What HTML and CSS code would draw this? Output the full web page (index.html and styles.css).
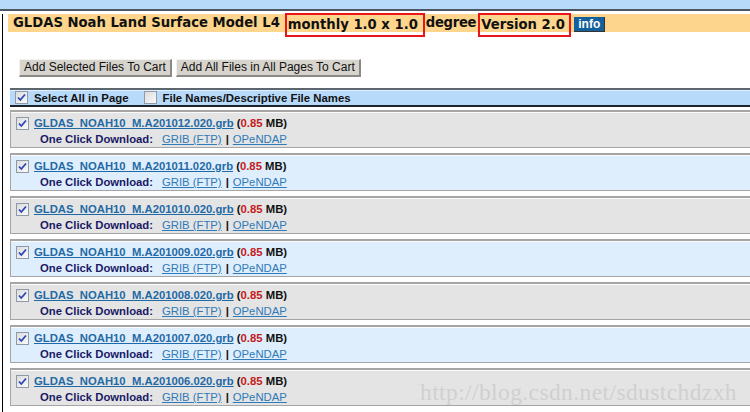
FILE: index.html
```html
<!DOCTYPE html>
<html>
<head>
<meta charset="utf-8">
<link rel="stylesheet" href="styles.css">
</head>
<body>
<div class="topbar"></div>
<div class="page">
  <div class="title">
    <span class="t">GLDAS Noah Land Surface Model L4</span>
    <span class="box box1">monthly 1.0 x 1.0</span>
    <span class="t deg">degree</span>
    <span class="box box2">Version 2.0</span>
    <span class="info">info</span>
  </div>
  <div class="buttons">
    <span class="btn">Add Selected Files To Cart</span>
    <span class="btn">Add All Files in All Pages To Cart</span>
  </div>
  <div class="head">
    <span class="cb on"><svg viewBox="0 0 13 13" width="13" height="13"><path d="M3 6.5 L5.3 9 L10 3.5" fill="none" stroke="#2c46b8" stroke-width="1.8"/></svg></span>
    <span class="hl">Select All in Page</span>
    <span class="cb off"></span>
    <span class="hl">File Names/Descriptive File Names</span>
  </div>
  <div class="list">
    <div class="row grey">
      <div class="l1"><span class="cb on"><svg viewBox="0 0 13 13" width="13" height="13"><path d="M3 6.5 L5.3 9 L10 3.5" fill="none" stroke="#2c46b8" stroke-width="1.8"/></svg></span><a class="fn">GLDAS_NOAH10_M.A201012.020.grb</a><span class="sz"> (<span class="red">0.85</span> MB)</span></div>
      <div class="l2"><span class="ocd">One Click Download:</span><a class="lk">GRIB (FTP)</a><span class="sep">|</span><a class="lk">OPeNDAP</a></div>
    </div>
    <div class="row blue">
      <div class="l1"><span class="cb on"><svg viewBox="0 0 13 13" width="13" height="13"><path d="M3 6.5 L5.3 9 L10 3.5" fill="none" stroke="#2c46b8" stroke-width="1.8"/></svg></span><a class="fn">GLDAS_NOAH10_M.A201011.020.grb</a><span class="sz"> (<span class="red">0.85</span> MB)</span></div>
      <div class="l2"><span class="ocd">One Click Download:</span><a class="lk">GRIB (FTP)</a><span class="sep">|</span><a class="lk">OPeNDAP</a></div>
    </div>
    <div class="row grey">
      <div class="l1"><span class="cb on"><svg viewBox="0 0 13 13" width="13" height="13"><path d="M3 6.5 L5.3 9 L10 3.5" fill="none" stroke="#2c46b8" stroke-width="1.8"/></svg></span><a class="fn">GLDAS_NOAH10_M.A201010.020.grb</a><span class="sz"> (<span class="red">0.85</span> MB)</span></div>
      <div class="l2"><span class="ocd">One Click Download:</span><a class="lk">GRIB (FTP)</a><span class="sep">|</span><a class="lk">OPeNDAP</a></div>
    </div>
    <div class="row blue">
      <div class="l1"><span class="cb on"><svg viewBox="0 0 13 13" width="13" height="13"><path d="M3 6.5 L5.3 9 L10 3.5" fill="none" stroke="#2c46b8" stroke-width="1.8"/></svg></span><a class="fn">GLDAS_NOAH10_M.A201009.020.grb</a><span class="sz"> (<span class="red">0.85</span> MB)</span></div>
      <div class="l2"><span class="ocd">One Click Download:</span><a class="lk">GRIB (FTP)</a><span class="sep">|</span><a class="lk">OPeNDAP</a></div>
    </div>
    <div class="row grey">
      <div class="l1"><span class="cb on"><svg viewBox="0 0 13 13" width="13" height="13"><path d="M3 6.5 L5.3 9 L10 3.5" fill="none" stroke="#2c46b8" stroke-width="1.8"/></svg></span><a class="fn">GLDAS_NOAH10_M.A201008.020.grb</a><span class="sz"> (<span class="red">0.85</span> MB)</span></div>
      <div class="l2"><span class="ocd">One Click Download:</span><a class="lk">GRIB (FTP)</a><span class="sep">|</span><a class="lk">OPeNDAP</a></div>
    </div>
    <div class="row blue">
      <div class="l1"><span class="cb on"><svg viewBox="0 0 13 13" width="13" height="13"><path d="M3 6.5 L5.3 9 L10 3.5" fill="none" stroke="#2c46b8" stroke-width="1.8"/></svg></span><a class="fn">GLDAS_NOAH10_M.A201007.020.grb</a><span class="sz"> (<span class="red">0.85</span> MB)</span></div>
      <div class="l2"><span class="ocd">One Click Download:</span><a class="lk">GRIB (FTP)</a><span class="sep">|</span><a class="lk">OPeNDAP</a></div>
    </div>
    <div class="row grey">
      <div class="l1"><span class="cb on"><svg viewBox="0 0 13 13" width="13" height="13"><path d="M3 6.5 L5.3 9 L10 3.5" fill="none" stroke="#2c46b8" stroke-width="1.8"/></svg></span><a class="fn">GLDAS_NOAH10_M.A201006.020.grb</a><span class="sz"> (<span class="red">0.85</span> MB)</span></div>
      <div class="l2"><span class="ocd">One Click Download:</span><a class="lk">GRIB (FTP)</a><span class="sep">|</span><a class="lk">OPeNDAP</a></div>
    </div>
  </div>
  <div class="watermark">http://blog.csdn.net/sdustchdzxh</div>
</div>
</body>
</html>
```
FILE: styles.css
```css
html, body {
  margin: 0;
  padding: 0;
  background: #fff;
  overflow: hidden;
}
body {
  width: 750px;
  height: 412px;
  font-family: "Liberation Sans", Arial, sans-serif;
  font-size: 12px;
}
.topbar {
  height: 9px;
  background: #b8dafa;
  border-bottom: 2px solid #4e5864;
}
.page {
  position: relative;
  margin-left: 2px;
  border-left: 1px solid #000;
  height: 401px;
  padding-left: 5px;
}
.title {
  margin-top: 3px;
  height: 18px;
  background: #fdd58c;
  display: flex;
  align-items: flex-start;
  font-family: "DejaVu Sans", Verdana, sans-serif;
  font-weight: bold;
  font-size: 13.2px;
  color: #111;
  white-space: nowrap;
}
.title .t {
  line-height: 18px;
}
.title > .t:first-child {
  padding-left: 5px;
  margin-right: 5px;
}
.title .deg {
  letter-spacing: -0.3px;
}
.box {
  box-sizing: border-box;
  height: 24px;
  margin-top: -1px;
  border: 2px solid #e8151b;
  line-height: 19px;
  padding: 0 2px 0 1px;
}
.box1 { width: 140px; margin-right: 1px; }
.box2 { width: 93px; margin-left: 2px; }
.info {
  margin-left: 3px;
  margin-top: 3px;
  height: 14px;
  line-height: 14px;
  padding: 0 4px;
  background: #13609c;
  color: #fff;
  font-family: "Liberation Sans", Arial, sans-serif;
  font-size: 12px;
  border-right: 1px solid #333;
  border-bottom: 1px solid #333;
}
.buttons {
  display: flex;
  gap: 4px;
  margin-top: 27px;
  margin-left: 11px;
}
.btn {
  box-sizing: border-box;
  height: 18px;
  line-height: 15px;
  padding: 0 4px;
  background: #d7d3cd;
  border-top: 1px solid #f4f2ef;
  border-left: 1px solid #f4f2ef;
  border-right: 2px solid #8c8984;
  border-bottom: 2px solid #8c8984;
  color: #111;
  font-size: 12px;
}
.head {
  margin-top: 11px;
  margin-left: 2px;
  height: 15px;
  display: flex;
  align-items: center;
  background: #b8dafa;
  border-top: 2px solid #5c6670;
  border-bottom: 2px solid #202428;
  box-shadow: inset 0 1px 0 #e2f0fd;
  padding-left: 5px;
  font-weight: bold;
  font-size: 11.4px;
  color: #111;
}
.head .hl { margin-left: 6px; margin-right: 15px; }
.cb {
  box-sizing: border-box;
  width: 13px;
  height: 13px;
  border: 1px solid #8e9aa8;
  background: linear-gradient(135deg, #dcdcdc, #fafafa);
  display: inline-flex;
  flex: none;
}
.cb svg { margin: -1px; }
.list {
  margin-left: 2px;
  margin-top: 3px;
  display: flex;
  flex-direction: column;
  gap: 5px;
}
.row {
  box-sizing: border-box;
  height: 38px;
  border-top: 2px solid #a5a5a5;
  border-bottom: 1px solid #a5a5a5;
  border-left: 1px solid #a5a5a5;
  box-shadow: inset 0 1px 0 #fbfbfb;
  padding: 3px 0 0 5px;
  font-size: 11.3px;
}
.grey { background: #e4e4e4; }
.blue { background: #dfeefd; }
.l1 {
  display: flex;
  align-items: center;
  height: 16px;
  font-weight: bold;
  white-space: nowrap;
}
.fn {
  margin-left: 5px;
  color: #1f6aa6;
  text-decoration: underline;
}
.sz { color: #111; white-space: pre; }
.red { color: #c41a1a; }
.l2 {
  margin-left: 24px;
  height: 16px;
  display: flex;
  align-items: center;
  white-space: nowrap;
}
.ocd {
  font-weight: bold;
  color: #1a1a66;
  width: 122px;
}
.lk {
  color: #2f7ab8;
  text-decoration: underline;
}
.sep {
  margin: 0 4px;
  color: #111;
  font-weight: bold;
}
.watermark {
  position: absolute;
  left: 417px;
  top: 365px;
  font-family: "Liberation Serif", "DejaVu Serif", serif;
  font-size: 23.5px;
  color: #d0d0d0;
  letter-spacing: 0.4px;
  white-space: nowrap;
}
```
